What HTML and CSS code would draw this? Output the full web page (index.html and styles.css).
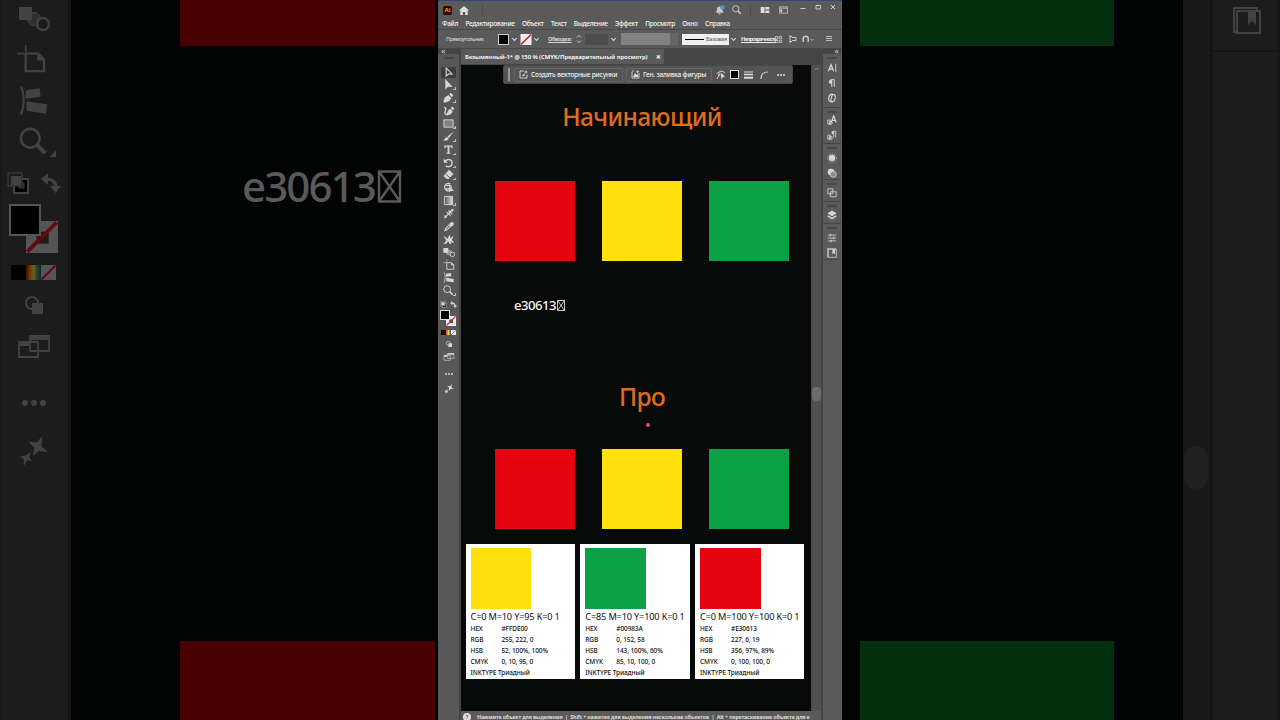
FILE: index.html
```html
<!DOCTYPE html>
<html lang="ru">
<head>
    <meta charset="UTF-8">
    <meta name="viewport" content="width=device-width, initial-scale=1.0">
    <title>Безымянный-1*</title>
    <link rel="stylesheet" href="styles.css">
</head>
<body>
    <!-- shared icons -->
    <svg class="sprite">
        <symbol id="i-select" viewBox="0 0 12 12"><path d="M3.500 1v9l2.300-2.200 4-.2z" fill="none" stroke="currentColor" stroke-width="1.200"/></symbol>
        <symbol id="i-direct" viewBox="0 0 12 12"><path d="M2.500 0v11.500L5.500 8.500l5 .2z" fill="currentColor"/></symbol>
        <symbol id="i-pen" viewBox="0 0 12 12"><path d="M.5 11.500c.2-4 1.500-7 5.500-8l3 3c-.6 3-4 4.700-8.500 5zM6.800 2.600L8.400.8l2.900 2.800-1.700 2z" fill="currentColor"/></symbol>
        <symbol id="i-curve" viewBox="0 0 12 12"><path d="M3.500 11.500c.2-4 1.500-6.500 4-7.500l2.500 2.500C9.500 9.500 7 11 3.500 11.500zM8 3.400L9.600 1.500l2.200 2.300-1.500 2z" fill="currentColor"/><path d="M.5 3c3.500-.5 1.500 3 1 5 0 1.500 1 2.500 2.500 2.500" fill="none" stroke="currentColor" stroke-width="1.400"/></symbol>
        <symbol id="i-rect" viewBox="0 0 12 12"><path d="M1 2h10v8H1z" fill="#808080" stroke="currentColor"/></symbol>
        <symbol id="i-brush" viewBox="0 0 12 12"><path d="M11.500.5L4.800 6l1.800 1.600zM4.300 6.600c-2.200.1-2.200 2.800-4 3.600 2.600 1.200 5.600.2 5.800-2.200z" fill="currentColor"/></symbol>
        <symbol id="i-type" viewBox="0 0 12 12"><path d="M1.500 1.500h9v3h-1L9 3H7v6.300l1.300.4v1H3.700v-1L5 9.300V3H3l-.5 1.500h-1z" fill="currentColor"/></symbol>
        <symbol id="i-rotate" viewBox="0 0 12 12"><path d="M2.700 4.500C5 1.500 10 2.700 10 6.500s-4.500 5.300-7 3" fill="none" stroke="currentColor" stroke-width="1.500"/><path d="M.8 1.500v4.700h4.500z" fill="currentColor"/></symbol>
        <symbol id="i-eraser" viewBox="0 0 12 12"><path d="M6.500.8L11.500 5.500 6 11H4L.5 7.500z" fill="currentColor"/><path d="M3 5.500L7.500 9.500" stroke="#555"/></symbol>
        <symbol id="i-shape" viewBox="0 0 12 12"><path d="M7.500 2C3.500.4.8 3.500 1.300 6.500c.6 2.500 3 3.500 5 3M3 4.500c2-1.500 5-1 6 1.500M2 7.500h4" fill="none" stroke="currentColor" stroke-width="1.300"/><path d="M6 4v7.500l1.900-1.800 3.600-.2z" fill="currentColor"/></symbol>
        <symbol id="i-grad" viewBox="0 0 12 12"><linearGradient id="gr"><stop offset="0" stop-color="#555"/><stop offset="1" stop-color="#ddd"/></linearGradient><path d="M1.500 1.500h9v9h-9z" fill="url(#gr)" stroke="currentColor"/></symbol>
        <symbol id="i-width" viewBox="0 0 12 12"><path d="M1.500 10.500L9.500 2" stroke="currentColor" stroke-width="1.300"/><path d="M3 4.500L8 9 6.500 5.800zM5 3l4.500 4L8 3zM1 11l.5-3 2 2zM10.800 1l-.5 3-2-2z" fill="currentColor" stroke="currentColor" stroke-width=".5"/></symbol>
        <symbol id="i-drop" viewBox="0 0 12 12"><path d="M1.500 10.500l.7-2.300L6.300 4l1.700 1.700-4.200 4z" fill="none" stroke="currentColor" stroke-width="1.200"/><path d="M5.800 3.300l3 3 .8-.7 1.500-1.800C11.800 2 10 .3 8.300 1.500L6.700 2.600z" fill="currentColor"/></symbol>
        <symbol id="i-puppet" viewBox="0 0 12 12"><path d="M0 2l2.500 1.500L4 5.500 6.500 1l1 .5L7 5l3-2.500.7.8L9 6l2.500 3.500h-2L8 8l.5 3H7L5 8l-2 2.500L0 11l3-4z" fill="currentColor"/></symbol>
        <symbol id="i-blend" viewBox="0 0 32 26"><path d="M1 1h13v13H1z" fill="currentColor"/><circle cx="16" cy="13" r="6.500" fill="currentColor" fill-opacity=".5" stroke="currentColor"/><circle cx="25" cy="18" r="6" fill="var(--bg)" stroke="currentColor" stroke-width="2.400"/></symbol>
        <symbol id="i-artboard" viewBox="0 0 32 30"><path d="M1 10h8M10 1v7" stroke="currentColor" stroke-width="1.700" fill="none"/><path d="M10 10h13l6 6v12H10z" fill="none" stroke="currentColor" stroke-width="2.400"/><path d="M22 9v8h8z" fill="currentColor"/></symbol>
        <symbol id="i-slice" viewBox="0 0 32 32"><path d="M2 1c4 8 4 21 0 30" fill="none" stroke="currentColor" stroke-width="2.200"/><path d="M7 5l15-2 1 9-16 2zM8 17l22 3-1 10-21-3z" fill="currentColor"/></symbol>
        <symbol id="i-zoom" viewBox="0 0 32 32"><circle cx="12" cy="12" r="10" fill="none" stroke="currentColor" stroke-width="2.700"/><path d="M19 19l9 9" stroke="currentColor" stroke-width="4.500"/></symbol>
        <symbol id="i-default" viewBox="0 0 22 22"><path d="M7 7h14v14H7z" fill="#000" stroke="currentColor" stroke-width="2"/><path d="M12 11h5v5h-5z" fill="var(--bg)" stroke="currentColor"/><path d="M1 1h14v13H1z" fill="var(--bg)" stroke="currentColor"/><path d="M4 4h10v9H4z" fill="currentColor"/></symbol>
        <symbol id="i-swap" viewBox="0 0 20 20"><path d="M5 6c7 0 10 3 10 9" fill="none" stroke="currentColor" stroke-width="3"/><path d="M7 0v12L0 6zM9 13h11l-5.500 7z" fill="currentColor"/></symbol>
        <symbol id="i-none" viewBox="0 0 12 12"><path d="M0 0h12v12H0z" fill="var(--paper)"/><path d="M4 4h4.500v4.500H4z" fill="var(--bg)"/><path d="M.5 11.500l11-11" stroke="var(--red)" stroke-width="1.400"/></symbol>
        <symbol id="i-slash" viewBox="0 0 12 12"><path d="M0 0h12v12H0z" fill="var(--paper)"/><path d="M.5 11.500l11-11" stroke="var(--red)" stroke-width="1.600"/></symbol>
        <symbol id="i-mode" viewBox="0 0 18 18"><circle cx="7" cy="7" r="6" fill="none" stroke="currentColor" stroke-width="2"/><path d="M7 7h11v11H7z" fill="currentColor"/></symbol>
        <symbol id="i-screen" viewBox="0 0 32 24"><path d="M1 7h19v15H1zM12 1h19v15H12z" fill="var(--bg)" stroke="currentColor" stroke-width="1.800"/><path d="M1 6h10v5H1zM12 1h19v4H12z" fill="currentColor"/></symbol>
        <symbol id="i-dots" viewBox="0 0 24 6"><circle cx="3" cy="3" r="3"/><circle cx="12" cy="3" r="3"/><circle cx="21" cy="3" r="3"/></symbol>
        <symbol id="i-spark" viewBox="0 0 30 32"><path d="M24 0l-1 11 7 6-10-1-6 6 1-10-6-6 9 1zM11 17l-1 6 3 4-5-1-4 6v-7l-4-3 6-1z" fill="currentColor"/></symbol>
        <symbol id="i-libs" viewBox="0 0 28 28"><path d="M4 25H1V1h23v3" fill="none" stroke="currentColor" stroke-width="2"/><path d="M4 4h23v22H4z" fill="none" stroke="currentColor" stroke-width="2"/><path d="M15 4h8v14l-4-4-4 4z" fill="currentColor"/></symbol>
        <symbol id="i-down" viewBox="0 0 8 8"><path d="M1.500 2.500L4 5l2.500-2.500" fill="none" stroke="currentColor" stroke-width="1.300"/></symbol>
        <symbol id="i-tofu" viewBox="0 0 8 11"><path d="M.5.5h7v10h-7zM.5.5l7 10M7.500.5l-7 10" fill="none" stroke="currentColor" stroke-width=".8"/></symbol>
    </svg>

    <div class="screen">
        <div class="backdrop left">
            <div class="big-tools">
                <svg class="b-blend"><use href="#i-blend"/></svg>
                <svg class="b-artboard"><use href="#i-artboard"/></svg>
                <svg class="b-slice"><use href="#i-slice"/></svg>
                <svg class="b-zoom more"><use href="#i-zoom"/></svg>
                <div class="big-swap">
                    <svg class="b-default"><use href="#i-default"/></svg>
                    <svg class="b-swap"><use href="#i-swap"/></svg>
                </div>
                <div class="big-fill">
                    <svg class="b-none"><use href="#i-none"/></svg>
                    <span class="b-fill"></span>
                </div>
                <div class="big-colors">
                    <span class="black"></span><span class="rainbow"></span>
                    <svg><use href="#i-slash"/></svg>
                </div>
                <svg class="b-mode"><use href="#i-mode"/></svg>
                <svg class="b-screen"><use href="#i-screen"/></svg>
                <svg class="b-dots" fill="currentColor"><use href="#i-dots"/></svg>
                <svg class="b-spark"><use href="#i-spark"/></svg>
            </div>
            <div class="big-canvas">
                <div class="big-sq red"></div>
                <div class="big-hex">e30613<svg><use href="#i-tofu"/></svg></div>
                <div class="big-sq red"></div>
            </div>
        </div>

        <div class="window">
            <div class="titlebar">
                <span class="logo">Ai</span>
                <svg class="home" viewBox="0 0 10 9"><path d="M5 0l5 4.600H8.700V9H6.100V6H3.900v3H1.300V4.600H0z" fill="#ddd"/></svg>
                <span class="sep"></span>
                <span class="grow"></span>
                <svg class="bell" viewBox="0 0 10 10"><path d="M.5 7.800c1.700-1 1.200-3.300 1.700-4.800C3.200 1 6 1 7 3c.6 1.500.2 3.800 1.700 4.800zM3.200 8.200h2.800L4.600 9.800z" fill="#ccc"/><circle cx="7.500" cy="2.500" r="2.300" fill="#3f9ae0"/></svg>
                <svg class="find"><use href="#i-zoom"/></svg>
                <span class="sep"></span>
                <svg class="arrange" viewBox="0 0 10 7"><path d="M0 0h4.500v7H0zM5.300 0H10v3H5.300zM5.300 4H10v3H5.300z" fill="#ddd"/></svg>
                <svg class="work" viewBox="0 0 10 8"><path d="M.5.5h9v7h-9zM.5 2h9" fill="none" stroke="#bbb"/><path d="M1.500 3h2v3.500h-2z" fill="#ccc"/></svg>
                <svg class="win" viewBox="0 0 6 6"><path d="M.5 4.500h5" stroke="#ccc"/></svg>
                <svg class="win" viewBox="0 0 6 6"><path d="M1 1.500h4.500v3.500H1z" fill="none" stroke="#ccc"/></svg>
                <svg class="win" viewBox="0 0 6 6"><path d="M1 1l4 4M5 1L1 5" stroke="#ccc"/></svg>
            </div>
            <div class="menubar">
                <span>Файл</span><span>Редактирование</span><span>Объект</span><span>Текст</span><span>Выделение</span><span>Эффект</span><span>Просмотр</span><span>Окно</span><span>Справка</span>
            </div>
            <div class="control">
                <span class="kind">Прямоугольник</span>
                <span class="swatch"></span>
                <svg class="chev"><use href="#i-down"/></svg>
                <svg class="stroke"><use href="#i-slash"/></svg>
                <svg class="chev"><use href="#i-down"/></svg>
                <span class="stroke-label">Обводка:</span>
                <svg class="step" viewBox="0 0 6 10"><path d="M1 3.500L3 1.500l2 2M1 6.500l2 2 2-2" fill="none" stroke="#ccc"/></svg>
                <span class="field"></span>
                <svg class="chev"><use href="#i-down"/></svg>
                <span class="profile"></span><span class="profile-end"></span>
                <span class="brushdef"><i></i>Базовая</span>
                <svg class="chev"><use href="#i-down"/></svg>
                <span class="opacity">Непрозрачность</span>
                <svg class="c-grid" viewBox="0 0 7 7"><path d="M.5.5h2.300v2.300H.5zM4.200.5h2.300v2.300H4.200zM.5 4.200h2.300v2.300H.5zM4.200 4.200h2.300v2.300H4.200z" fill="none" stroke="#ccc" stroke-width=".8"/></svg>
                <svg class="c-align" viewBox="0 0 8 8"><path d="M1 0v8M1 1.500h2M1 6.500h2M3 2.500h4v3H3" fill="none" stroke="#ccc"/></svg>
                <svg class="c-snap" viewBox="0 0 12 8"><path d="M1.200 7V3.500c0-3 5-3 5 0V7" fill="none" stroke="#ccc" stroke-width="1.400"/><path d="M8.500 4l1.500 1.500L11.500 4" fill="none" stroke="#ccc" stroke-width=".8"/></svg>
                <svg class="c-menu" viewBox="0 0 6 6"><path d="M0 .5h6M0 2.500h6M0 4.500h6" stroke="#bbb"/></svg>
            </div>

            <div class="main">
                <div class="tools">
                    <div class="head">«</div>
                    <svg class="on"><use href="#i-select"/></svg>
                    <svg class="more"><use href="#i-direct"/></svg>
                    <svg class="more"><use href="#i-pen"/></svg>
                    <svg><use href="#i-curve"/></svg>
                    <svg class="more"><use href="#i-rect"/></svg>
                    <svg class="more"><use href="#i-brush"/></svg>
                    <svg class="more"><use href="#i-type"/></svg>
                    <svg class="more"><use href="#i-rotate"/></svg>
                    <svg class="more"><use href="#i-eraser"/></svg>
                    <svg><use href="#i-shape"/></svg>
                    <svg class="more"><use href="#i-grad"/></svg>
                    <svg><use href="#i-width"/></svg>
                    <svg><use href="#i-drop"/></svg>
                    <svg><use href="#i-puppet"/></svg>
                    <svg><use href="#i-blend"/></svg>
                    <svg><use href="#i-artboard"/></svg>
                    <svg><use href="#i-slice"/></svg>
                    <svg class="more"><use href="#i-zoom"/></svg>
                    <div class="swap">
                        <svg><use href="#i-default"/></svg>
                        <svg><use href="#i-swap"/></svg>
                    </div>
                    <div class="fill">
                        <svg><use href="#i-none"/></svg>
                        <span></span>
                    </div>
                    <div class="colors">
                        <span class="black"></span><span class="rainbow"></span>
                        <svg><use href="#i-slash"/></svg>
                    </div>
                    <svg class="t-mode"><use href="#i-mode"/></svg>
                    <svg class="t-screen"><use href="#i-screen"/></svg>
                    <svg class="t-dots" fill="currentColor"><use href="#i-dots"/></svg>
                    <svg class="t-spark"><use href="#i-spark"/></svg>
                </div>

                <div class="doc">
                    <div class="tabs">
                        <div class="tab"><span>Безымянный-1* @ 150 % (CMYK/Предварительный просмотр)</span><b>×</b></div>
                    </div>
                    <div class="view">
                        <div class="canvas">
                            <div class="context">
                                <span class="grip"></span>
                                <span class="btn gen">
                                    <svg viewBox="0 0 9 9"><path d="M5 1H1v7h7V4.500" fill="none" stroke="#ccc"/><path d="M7 0l.5 1.500L9 2l-1.500.5L7 4l-.5-1.500L5 2l1.500-.5zM3 6l2.500-3v3z" fill="#ddd"/></svg>
                                    <span>Создать векторные рисунки</span>
                                </span>
                                <span class="btn shape">
                                    <svg viewBox="0 0 9 9"><path d="M1 2v6h7V3M1 1h2" fill="none" stroke="#ccc"/><path d="M2 7l2-4 1.500 2L7 4v3zM6.500 0L7 1.300l1.500.5L7 2.300 6.500 4 6 2.300 4.500 1.800 6 1.300z" fill="#ddd"/></svg>
                                    <span>Ген. заливка фигуры</span>
                                </span>
                                <svg class="x-recolor" viewBox="0 0 10 10"><path d="M.5 3.500L5 1M3 2.500V6M5 1l4 1.500M1 9l2.500-5" stroke="#ccc" fill="none"/><path d="M4.500 2.500l4.800 4.300H7L5.500 9.500z" fill="#ddd"/></svg>
                                <span class="x-fill"></span>
                                <svg class="x-lines" viewBox="0 0 9 8"><path d="M0 1h9" stroke="#ddd"/><path d="M0 3.500h9" stroke="#ddd" stroke-width="1.500"/><path d="M0 6.700h9" stroke="#ddd" stroke-width="2"/></svg>
                                <svg class="x-arc" viewBox="0 0 8 8"><path d="M1 8C1 3 3.500 1 8 1" fill="none" stroke="#ccc" stroke-width="1.200"/></svg>
                                <svg class="x-dots" fill="#ddd"><use href="#i-dots"/></svg>
                            </div>

                            <h1>Начинающий</h1>
                            <div class="squares">
                                <div class="red"></div><div class="yellow"></div><div class="green"></div>
                            </div>
                            <div class="hex">e30613<svg><use href="#i-tofu"/></svg></div>
                            <h1 class="pro">Про</h1>
                            <div class="dot"></div>
                            <div class="squares">
                                <div class="red"></div><div class="yellow"></div><div class="green"></div>
                            </div>
                            <div class="cards">
                                <div class="card">
                                    <div class="chip yellow"></div>
                                    <h2>C=0 M=10 Y=95 K=0 1</h2>
                                    <p><span>HEX</span>#FFDE00</p>
                                    <p><span>RGB</span>255, 222, 0</p>
                                    <p><span>HSB</span>52, 100%, 100%</p>
                                    <p><span>CMYK</span>0, 10, 95, 0</p>
                                    <p>INKTYPE Триадный</p>
                                </div>
                                <div class="card">
                                    <div class="chip green"></div>
                                    <h2>C=85 M=10 Y=100 K=0 1</h2>
                                    <p><span>HEX</span>#00983A</p>
                                    <p><span>RGB</span>0, 152, 58</p>
                                    <p><span>HSB</span>143, 100%, 60%</p>
                                    <p><span>CMYK</span>85, 10, 100, 0</p>
                                    <p>INKTYPE Триадный</p>
                                </div>
                                <div class="card">
                                    <div class="chip red"></div>
                                    <h2>C=0 M=100 Y=100 K=0 1</h2>
                                    <p><span>HEX</span>#E30613</p>
                                    <p><span>RGB</span>227, 6, 19</p>
                                    <p><span>HSB</span>356, 97%, 89%</p>
                                    <p><span>CMYK</span>0, 100, 100, 0</p>
                                    <p>INKTYPE Триадный</p>
                                </div>
                            </div>
                        </div>
                        <div class="scroll">
                            <svg viewBox="0 0 8 8"><path d="M2 5l2-2 2 2" fill="none" stroke="#999"/></svg>
                            <span></span>
                        </div>
                    </div>
                    <div class="status">
                        <i>?</i>
                        <span>Нажмите объект для выделения &nbsp;|&nbsp; Shift + нажатие для выделения нескольких объектов &nbsp;|&nbsp; Alt + перетаскивание объекта для е</span>
                    </div>
                </div>

                <div class="dock">
                    <div class="head">«</div>
                    <div class="group g3">
                        <svg viewBox="0 0 12 12"><path d="M1.500 10L4.800 2l3.200 8M2.600 7.300h4.300" fill="none" stroke="currentColor" stroke-width="1.500"/><path d="M10.500 1v10" stroke="currentColor"/></svg>
                        <svg viewBox="0 0 12 12"><path d="M5.700 10.500V2h3v8.500" fill="none" stroke="currentColor" stroke-width="1.200"/><path d="M6 1.500C1 1.500 1 7.500 6 7z" fill="currentColor"/></svg>
                        <svg viewBox="0 0 12 12"><path d="M7 1.500C1.500.5.500 9.500 4.500 10.500M7.500 1.500c4 1 3 10-3 9M7.500 1.500C5 3 4.500 8 5 10" fill="none" stroke="currentColor" stroke-width="1.300"/></svg>
                    </div>
                    <div class="group g2">
                        <svg viewBox="0 0 12 12"><path d="M5 9l3-8 3 8M6 6.500h4" fill="none" stroke="currentColor" stroke-width="1.400"/><path d="M1 6h3v5H1zM3 8h3v3H3z" fill="none" stroke="currentColor"/></svg>
                        <svg viewBox="0 0 12 12"><path d="M8 9V1.500h2.500V9" fill="none" stroke="currentColor"/><path d="M8 1C4.500 1 4.500 5.500 8 5.500z" fill="currentColor"/><path d="M1 6h3v5H1zM3 8h3v3H3z" fill="none" stroke="currentColor"/></svg>
                    </div>
                    <div class="group g2">
                        <svg viewBox="0 0 12 12"><circle cx="6" cy="6" r="3.800" fill="currentColor"/><circle cx="6" cy="6" r="5.200" fill="none" stroke="currentColor" stroke-dasharray="1 1.200"/></svg>
                        <svg viewBox="0 0 12 12"><circle cx="4.800" cy="4.800" r="4" fill="currentColor"/><circle cx="7.500" cy="7.500" r="3.600" fill="#888" stroke="currentColor"/></svg>
                    </div>
                    <div class="group g1">
                        <svg viewBox="0 0 12 12"><path d="M1 1h6v6H1zM4 4.500h7v6H4z" fill="#5a5a5a" stroke="currentColor"/></svg>
                    </div>
                    <div class="group g1">
                        <svg viewBox="0 0 12 12"><path d="M6 .5l5.500 3.500L6 7.500.5 4z" fill="currentColor"/><path d="M1 7l5 3.300L11 7" fill="none" stroke="currentColor" stroke-width="1.800"/></svg>
                    </div>
                    <div class="group g2">
                        <svg viewBox="0 0 12 12"><path d="M1 2.500h10M1 6h10M1 9.500h10M4 1v3M8 4.500v3M5 8v3" stroke="currentColor"/></svg>
                        <svg><use href="#i-libs"/></svg>
                    </div>
                </div>
            </div>
        </div>

        <div class="backdrop right">
            <div class="big-canvas">
                <div class="big-sq green"></div>
                <div class="big-sq green"></div>
            </div>
            <div class="big-scroll"><span></span></div>
            <div class="big-dock"><svg><use href="#i-libs"/></svg></div>
        </div>
    </div>
</body>
</html>
```
FILE: styles.css
```css
* {
    box-sizing: border-box;
}
body {
    margin: 0;
    background: #000;
    font-family: "Noto Sans", "Open Sans", sans-serif;
    overflow: hidden;
}
svg {
    display: block;
    flex: none;
}
.sprite {
    position: absolute;
    width: 0;
    height: 0;
}
.screen {
    display: flex;
    width: 1280px;
    height: 720px;
}
.red { background: #e5050f; }
.yellow { background: #ffe00d; }
.green { background: #0ca144; }

/* dimmed enlargement on both sides */
.backdrop {
    --bg: #1c1c1c;
    --paper: #555;
    --red: #630a0c;
    display: flex;
    width: 438px;
    height: 720px;
    overflow: hidden;
    background: #020303;
    color: #424242;
}
.left { border-right: 3px solid #000; }
.backdrop .red { background: #490003; }
.backdrop .green { background: #03310f; }
.big-tools {
    display: flex;
    flex-direction: column;
    align-items: center;
    width: 71px;
    height: 720px;
    padding-right: 3px;
    border-left: 2px solid #171717;
    border-right: 3px solid #161616;
    background: var(--bg);
}
.b-blend { width: 32px; height: 26px; margin-top: 6px; }
.b-artboard { width: 31px; height: 29px; margin-top: 12px; margin-right: 4px; }
.b-slice { width: 30px; height: 31px; margin-top: 12px; }
.b-zoom { width: 30px; height: 30px; margin-top: 11px; }
.big-swap {
    display: flex;
    justify-content: space-between;
    width: 54px;
    height: 22px;
    margin-top: 15px;
}
.b-default { width: 22px; height: 22px; }
.b-swap { width: 20px; height: 20px; margin-top: 1px; }
.big-fill {
    position: relative;
    width: 50px;
    height: 50px;
    margin-top: 10px;
}
.b-fill {
    position: absolute;
    left: 0;
    top: 0;
    width: 32px;
    height: 32px;
    border: 2px solid #555;
    background: #000;
}
.b-none {
    position: absolute;
    left: 17px;
    top: 17px;
    width: 32px;
    height: 32px;
}
.big-colors {
    display: flex;
    width: 46px;
    height: 15px;
    margin-top: 11px;
}
.big-colors > * {
    width: 15px;
    height: 15px;
}
.black { background: #000; }
.rainbow { background: linear-gradient(90deg, #e22, #f80, #fd3, #4a5, #24a); }
.backdrop .rainbow { background: linear-gradient(90deg, #3a0d05, #713308, #686416, #1c462f, #14213b); }
.b-mode { width: 18px; height: 18px; margin-top: 16px; }
.b-screen { width: 32px; height: 24px; margin-top: 21px; }
.b-dots { width: 24px; height: 6px; margin-top: 41px; }
.b-spark { width: 28px; height: 30px; margin-top: 30px; }
.big-canvas {
    flex: 1;
    display: flex;
    flex-direction: column;
    justify-content: space-between;
    height: 720px;
    padding-left: 109px;
}
.big-sq {
    width: 255px;
    height: 46px;
}
.big-sq:last-child { height: 79px; }
.big-hex {
    display: flex;
    align-items: center;
    margin: 0 0 315px 62px;
    color: #5a5a5a;
    font-size: 42px;
    font-weight: 500;
    line-height: 52px;
    letter-spacing: -1.900px;
}
.big-hex svg { width: 25px; height: 33px; margin-left: 2px; }
.right .big-canvas { padding-left: 18px; }
.right .big-sq { width: 254px; }
.big-scroll {
    width: 30px;
    padding: 446px 2px 0 1px;
    border-right: 3px solid #151515;
    background: #191919;
}
.big-scroll span {
    display: block;
    height: 43px;
    border-radius: 13px;
    background: #202020;
}
.big-dock {
    width: 67px;
    padding: 7px 0 0 20px;
    border-right: 2px solid #161616;
    background: linear-gradient(#151515, #151515) 0 50px / 100% 2px no-repeat var(--bg);
}
.big-dock svg { width: 28px; height: 28px; }

/* application window */
.window {
    --bg: #585858;
    --paper: #eee;
    --red: #c8202c;
    display: flex;
    flex-direction: column;
    width: 404px;
    height: 720px;
    background: #5a5a5a;
    color: #d6d6d6;
    overflow: hidden;
}
.titlebar {
    display: flex;
    align-items: center;
    height: 18px;
    padding: 1px 6px 0 5px;
    border-top: 1px solid #39427a;
}
.logo {
    width: 9px;
    height: 9px;
    border-radius: 2px;
    background: #2d0a00;
    color: #ff9a00;
    font-size: 6px;
    font-weight: bold;
    line-height: 8px;
    text-align: center;
}
.home { width: 10px; height: 9px; margin: 0 13px 0 7px; }
.sep { width: 1px; height: 12px; background: #4e4e4e; }
.grow { flex: 1; }
.bell { width: 10px; height: 10px; margin-right: 7px; }
.find { width: 10px; height: 10px; margin-right: 8px; }
.arrange { width: 10px; height: 6px; margin: 0 9px 0 9px; }
.work { width: 9px; height: 8px; margin-right: 3px; }
.win { width: 6px; height: 6px; margin: -6px 0 0 9px; }
.win:last-child { margin-right: 0; }
.menubar {
    display: flex;
    align-items: center;
    gap: 7.400px;
    height: 11px;
    padding-left: 4px;
    color: #f4f4f4;
    font-size: 6.500px;
    font-weight: 500;
    line-height: 11px;
    white-space: nowrap;
    letter-spacing: -.29px;
}
.control {
    display: flex;
    align-items: center;
    height: 20px;
    padding-left: 8px;
    border-top: 1px solid #484848;
    border-bottom: 1px solid #484848;
    white-space: nowrap;
}
.control > * { flex: none; }
.kind { width: 52px; font-size: 5.300px; font-weight: 500; letter-spacing: -.3px; }
.swatch { width: 11px; height: 11px; border: 1px solid #ccc; background: #000; }
.chev { width: 7px; height: 7px; margin: 0 2px; }
.control .swatch + .chev { margin: 0 1px 0 2px; }
.stroke { width: 12px; height: 11px; margin-left: 1px; }
.control .stroke + .chev { margin-left: 1px; }
.stroke-label {
    width: 28px;
    margin-left: 6px;
    font-size: 5.500px;
    font-weight: bold;
    letter-spacing: -.3px;
    text-decoration: underline;
}
.step { width: 6px; height: 10px; margin-right: 3px; }
.field { width: 23px; height: 11px; background: #4c4c4c; }
.profile { width: 49px; height: 12px; margin-left: 2px; background: #828282; }
.profile-end { width: 8px; height: 12px; margin-right: 4px; background: #666; }
.brushdef {
    display: flex;
    align-items: center;
    gap: 2px;
    width: 47px;
    height: 11px;
    padding-left: 3px;
    background: #f0f0f0;
    color: #555;
    font-size: 5.500px;
    letter-spacing: -.1px;
}
.control .brushdef + .chev { margin-left: 1px; }
.brushdef i { width: 19px; height: 1px; background: #000; }
.opacity {
    width: 34px;
    margin-left: 2px;
    color: #eee;
    font-size: 5.500px;
    font-weight: bold;
    letter-spacing: -.85px;
    text-decoration: underline;
}
.c-grid { width: 7px; height: 7px; }
.c-align { width: 8px; height: 8px; margin-left: 7px; }
.c-snap { width: 12px; height: 8px; margin-left: 5px; }
.c-menu { width: 6px; height: 6px; margin-left: 12px; }

.main {
    display: flex;
    height: 671px;
}
.head {
    height: 5px;
    color: #ccc;
    font-size: 9px;
    line-height: 3px;
}
.tools {
    display: flex;
    flex-direction: column;
    align-items: center;
    width: 23px;
    border-right: 2px solid #434343;
    background: #585858;
}
.tools .head {
    align-self: stretch;
    height: 17px;
    padding-left: 3px;
    margin-bottom: .5px;
    background: linear-gradient(#484848, #484848) 50% 8px / 10px 2px no-repeat, linear-gradient(#444 5px, #585858 5px);
}
.tools > svg {
    width: 20px;
    height: 11px;
    margin-bottom: 1.870px;
    padding: 0 4px;
}
.tools > .on { width: 15px; padding: 0 2px; background: #3d3d3d; }
.tools > .more {
    width: 15px;
    padding: 0 2px;
}
.more {
    background: linear-gradient(135deg, transparent 50%, #bbb 50%) 100% 100% / 3px 3px no-repeat;
}
.b-zoom.more {
    width: 37px;
    margin-left: 7px;
    padding-right: 7px;
    background: linear-gradient(135deg, transparent 50%, #424242 50%) 100% 100% / 6px 6px no-repeat;
}
.swap {
    display: flex;
    justify-content: space-between;
    width: 17px;
    margin: 3px 0 2.500px;
}
.swap svg { width: 7px; height: 7px; }
.fill {
    position: relative;
    width: 16px;
    height: 16px;
    margin-right: 1px;
}
.fill span {
    position: absolute;
    left: 0;
    top: 0;
    width: 10px;
    height: 10px;
    border: 1px solid #ddd;
    background: #000;
}
.fill svg {
    position: absolute;
    left: 6px;
    top: 6px;
    width: 10px;
    height: 10px;
}
.colors {
    display: flex;
    width: 15px;
    margin: 4px 0 6px;
}
.colors > * { width: 5px; height: 5px; }
.tools .t-mode { height: 6px; margin-bottom: 6px; }
.tools .t-screen { height: 8px; margin-bottom: 12px; }
.tools .t-dots { width: 8px; height: 2px; margin-bottom: 9px; padding: 0; }
.tools .t-spark { height: 10px; }

.doc {
    display: flex;
    flex-direction: column;
    width: 360px;
}
.tabs {
    height: 16px;
    background: #454545;
}
.tab {
    display: flex;
    justify-content: space-between;
    align-items: center;
    width: 203px;
    height: 15px;
    padding: 0 3px 0 4px;
    background: #5a5a5a;
    color: #f0f0f0;
    font-size: 5.900px;
    font-weight: bold;
    white-space: nowrap;
    letter-spacing: -.08px;
}
.tab b { font-size: 9px; }
.view {
    display: flex;
    height: 646px;
}
.canvas {
    position: relative;
    width: 350px;
    padding: 37px 7px 0 4px;
    background: #070a09;
}
.context {
    position: absolute;
    left: 42px;
    top: 0;
    display: flex;
    align-items: center;
    width: 290px;
    height: 19px;
    padding-left: 4px;
    border: 1px solid #484848;
    border-radius: 2px;
    background: #545454;
    color: #f0f0f0;
    font-size: 6.600px;
    font-weight: 500;
    white-space: nowrap;
    letter-spacing: -.22px;
}
.grip { width: 2px; height: 13px; margin-right: 4px; background: #999; }
.btn {
    display: flex;
    align-items: center;
    gap: 3px;
    height: 14px;
    padding-left: 4px;
    border: 1px solid #666;
    border-radius: 2px;
}
.btn svg { width: 9px; height: 9px; }
.gen { width: 109px; margin-right: 3px; }
.shape { width: 86px; margin-right: 4px; }
.x-recolor { width: 10px; height: 10px; margin-right: 4px; }
.x-fill { width: 9px; height: 9px; margin-right: 5px; border: 1px solid #ddd; background: #000; }
.x-lines { width: 9px; height: 8px; margin-right: 7px; }
.x-arc { width: 8px; height: 8px; margin-right: 9px; }
.x-dots { width: 8px; height: 2px; }
h1 {
    height: 30px;
    margin: 0;
    padding-left: 15px;
    color: #e06d1e;
    font-size: 24.500px;
    font-weight: 500;
    line-height: 30px;
    text-align: center;
    letter-spacing: -.6px;
}
.squares {
    display: flex;
    gap: 27px;
    margin: 49px 0 0 30px;
}
.squares div { width: 80px; height: 80px; }
.hex {
    display: flex;
    align-items: center;
    height: 20px;
    margin: 34px 0 0 49px;
    color: #f4f4f4;
    font-size: 13.200px;
    font-weight: 500;
    line-height: 20px;
    letter-spacing: -.55px;
}
.hex svg { width: 8px; height: 11px; margin-left: 1px; }
.pro { margin-top: 67px; }
.dot {
    width: 4px;
    height: 4px;
    margin: 11px 0 0 181px;
    border-radius: 2px;
    background: #e0574f;
}
.dot + .squares { margin-top: 22px; }
.cards {
    display: flex;
    gap: 5.500px;
    margin: 15px 0 0 .5px;
}
.card {
    flex: none;
    width: 109.300px;
    height: 135px;
    padding: 4px 0 0 5px;
    background: #fff;
    color: #111;
    white-space: nowrap;
}
.chip { width: 60.500px; height: 61px; }
.card h2 {
    margin: 2px 0 1px;
    font-size: 9.200px;
    font-weight: 400;
    line-height: 12px;
    letter-spacing: -.17px;
}
.card p {
    display: flex;
    margin: 0;
    font-size: 6.500px;
    font-weight: 500;
    line-height: 10.900px;
    letter-spacing: -.1px;
}
.card p span { width: 31px; }
.scroll {
    width: 10px;
    border-left: 1px solid #4a4a4a;
    background: #505050;
}
.scroll svg { width: 9px; height: 8px; }
.scroll span {
    display: block;
    height: 14px;
    margin-top: 314px;
    border-radius: 4px;
    background: #6c6c6c;
}
.status {
    display: flex;
    gap: 6px;
    height: 9px;
    padding: 2px 0 0 2px;
    color: #ddd;
    font-size: 5.300px;
    font-weight: bold;
    line-height: 9px;
    white-space: nowrap;
    letter-spacing: -.14px;
}
.status i {
    flex: none;
    width: 8px;
    height: 8px;
    border-radius: 50%;
    background: #ddd;
    color: #555;
    font-style: normal;
    line-height: 8px;
    text-align: center;
}
.dock {
    width: 21px;
    padding-right: 1px;
    border-left: 2px solid #454545;
    background: #5a5a5a;
}
.dock .head { padding-right: 2px; background: #444; text-align: right; }
.group {
    display: flex;
    flex-direction: column;
    align-items: center;
    gap: 5px;
    padding-top: 9px;
    padding-right: 1px;
    border-bottom: 1px solid #454545;
    background: linear-gradient(#484848, #484848) 50% 3px / 10px 2px no-repeat;
}
.group svg { width: 10px; height: 10px; }
.g3 { height: 54px; }
.g2 { height: 36px; }
.g1 { height: 22px; padding-top: 8px; }
.g3 + .g2 { padding-top: 7px; }
```
